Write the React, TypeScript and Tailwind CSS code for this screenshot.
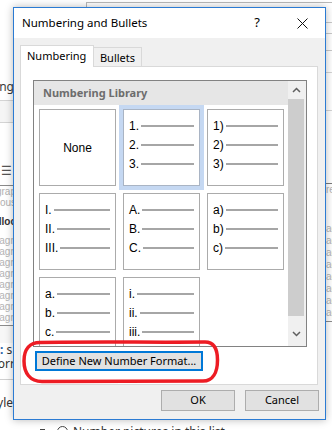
import React from 'react'

interface Cell {
  labels?: string[]
  none?: boolean
  selected?: boolean
}

const cells: Cell[] = [
  { none: true },
  { labels: ['1.', '2.', '3.'], selected: true },
  { labels: ['1)', '2)', '3)'] },
  { labels: ['I.', 'II.', 'III.'] },
  { labels: ['A.', 'B.', 'C.'] },
  { labels: ['a)', 'b)', 'c)'] },
  { labels: ['a.', 'b.', 'c.'] },
  { labels: ['i.', 'ii.', 'iii.'] },
]

function NumberCell({ cell }: { cell: Cell }) {
  const ring = cell.selected ? 'shadow-[0_0_0_4px_#c5d8f2] border-[#a9b4c4]' : 'border-[#ababab]'
  if (cell.none) {
    return (
      <div className={`h-[77px] w-[77px] border bg-white flex items-center justify-center text-[12px] text-black ${ring}`}>
        None
      </div>
    )
  }
  return (
    <div className={`h-[77px] w-[77px] border bg-white px-[5px] pt-[6px] flex flex-col ${ring}`}>
      {cell.labels?.map((label) => (
        <div key={label} className="h-[19px] flex items-center">
          <span className="text-[12px] leading-none text-black">{label}</span>
          <div className="ml-[2px] h-[2px] flex-1 bg-[#a6a6a6]" />
        </div>
      ))}
    </div>
  )
}

function Chevron({ up }: { up?: boolean }) {
  return (
    <svg width="9" height="6" viewBox="0 0 9 6">
      <path
        d={up ? 'M1 5 L4.5 1.5 L8 5' : 'M1 1 L4.5 4.5 L8 1'}
        fill="none"
        stroke="#5f5f5f"
        strokeWidth="1.5"
      />
    </svg>
  )
}

function LeftStrip() {
  return (
    <div className="w-[16px] h-[413px] overflow-hidden flex flex-col leading-none text-[11px] font-['Liberation_Sans',Arial,sans-serif]">
      <div className="h-[71px] bg-white" />
      <div className="h-[17px] flex items-center justify-end whitespace-nowrap text-[12px] text-[#3a3a3a] font-['Noto_Sans',sans-serif] pr-[2px]">
        Numbering
      </div>
      <div className="h-[5px]" />
      <div className="h-[23px] bg-[#f5f5f5] border-y border-[#d4d4d4]" />
      <div className="h-[40px] bg-white" />
      <div className="h-[15px] flex items-center pl-[1px] text-[12px] text-[#555]">☰</div>
      <div className="h-[7px] bg-white" />
      <div className="h-[1px] bg-[#8a8a8a]" />
      <div className="h-[11px] flex items-center justify-end whitespace-nowrap text-[10px] text-[#b0b0b0]">Paragrap</div>
      <div className="h-[12px] flex items-center justify-end whitespace-nowrap text-[10px] text-[#b0b0b0]">Previous</div>
      <div className="h-[6px]" />
      <div className="h-[14px] flex items-center justify-end whitespace-nowrap text-[10px] font-bold text-[#333]">Followlloc</div>
      <div className="h-[6px]" />
      {[0, 1, 2, 3, 4, 5, 6, 7].map((i) => (
        <div key={i} className="h-[11px] flex items-center justify-end whitespace-nowrap text-[10px] text-[#b4b4b4]">
          Paragn
        </div>
      ))}
      <div className="h-[2px]" />
      <div className="h-[1px] bg-[#8c8c8c]" />
      <div className="h-[17px] bg-[#f7f7f7]" />
      <div className="h-[14px] flex items-center whitespace-nowrap text-[12px] text-[#333] font-['Noto_Sans',sans-serif]">
        <span className="text-[#1f5fa8] font-bold">:</span>&nbsp;s
      </div>
      <div className="h-[14px] flex items-center justify-end whitespace-nowrap text-[12px] text-[#333] font-['Noto_Sans',sans-serif] pr-[1px]">
        Forr
      </div>
      <div className="h-[8px]" />
      <div className="h-[1px] bg-[#d0d0d0]" />
      <div className="h-[16px]" />
      <div className="h-[14px] flex items-center justify-end whitespace-nowrap text-[12px] text-[#333] font-['Noto_Sans',sans-serif] pr-[3px]">
        Style
      </div>
    </div>
  )
}

function RightStrip() {
  return (
    <div className="w-[6px] h-[413px] overflow-hidden flex flex-col leading-none text-[10px] font-['Liberation_Sans',Arial,sans-serif]">
      <div className="h-[15px]" />
      <div className="h-[1px] bg-[#c8c8c8]" />
      <div className="h-[10px]" />
      <div className="h-[1px] bg-[#c8c8c8]" />
      <div className="h-[16px]" />
      <div className="h-[1px] bg-[#c8c8c8]" />
      <div className="h-[21px]" />
      <div className="h-[1px] bg-[#d4d4d4]" />
      <div className="h-[37px]" />
      <div className="h-[1px] bg-[#d4d4d4]" />
      <div className="h-[72px]" />
      <div className="h-[1px] bg-[#7a7a7a]" />
      <div className="h-[12px] flex items-center whitespace-nowrap text-[#b4b4b4]">re</div>
      <div className="h-[27px]" />
      {[0, 1, 2, 3, 4, 5, 6, 7].map((i) => (
        <div key={i} className="h-[12px] flex items-center whitespace-nowrap text-[#b4b4b4]">agn</div>
      ))}
      <div className="h-[2px]" />
      <div className="h-[1px] bg-[#8c8c8c]" />
    </div>
  )
}

export default function App() {
  return (
    <div className="relative w-[332px] h-[430px] overflow-hidden bg-white font-['Noto_Sans',sans-serif]">
      {/* the Word window behind the dialog */}
      <div className="flex flex-col">
        <div className="h-[7px] flex">
          <div className="w-[86px]" />
          <div className="flex-1 mt-[2px] border-t border-l border-[#b9b9b9]" />
        </div>
        <div className="flex justify-between">
          <LeftStrip />
          <RightStrip />
        </div>
        <div className="h-[10px] flex items-start pt-[6px] text-[12px] text-[#333] whitespace-nowrap">
          <div className="w-[40px]" />
          <div className="w-[5px] h-[1px] mt-[3px] bg-[#444]" />
          <div className="ml-[12px] w-[11px] h-[11px] rounded-full border border-[#444]" />
          <span className="ml-[5px] leading-none">Number pictures in this list</span>
        </div>
      </div>

      {/* dialog */}
      <div className="absolute left-[13px] top-[7px] w-[313px] h-[413px] border border-[#2b7bd3] bg-[#f0f0f0] shadow-[0_0_8px_rgba(0,0,0,0.28)] flex flex-col">
        <div className="h-[30px] bg-white flex items-center">
          <div className="flex-1 pl-[8px] text-[11.5px] text-black">Numbering and Bullets</div>
          <div className="w-[46px] h-[30px] flex items-center justify-center text-[13px] text-black">?</div>
          <div className="w-[45px] h-[30px] flex items-center justify-center">
            <svg width="11" height="11" viewBox="0 0 11 11">
              <path d="M0.5 0.5 L10.5 10.5 M10.5 0.5 L0.5 10.5" stroke="#111" strokeWidth="1" />
            </svg>
          </div>
        </div>

        <div className="pl-[6px] pt-[7px] flex flex-col text-[11px] text-black">
          <div className="h-[22px] flex items-end">
            <div className="relative z-10 h-[22px] w-[74px] bg-white border border-b-0 border-[#d9d9d9] pl-[6px] flex items-center">
              Numbering
            </div>
            <div className="h-[20px] w-[48px] border-t border-r border-[#d9d9d9] flex items-center justify-center pt-[1px]">
              Bullets
            </div>
          </div>

          <div className="-mt-[1px] w-[298px] h-[319px] bg-white border border-[#d9d9d9] pl-[12px] pt-[13px]">
            <div className="w-[274px] h-[267px] border border-[#828282] flex">
              <div className="w-[254px] h-[265px] overflow-hidden">
                <div className="h-[24px] bg-[#e6e6e6] pl-[9px] flex items-center font-bold text-[#6d6d6d]">
                  Numbering Library
                </div>
                <div className="pl-[5px] pt-[4px] grid grid-cols-[77px_77px_77px] gap-[7px] font-['Liberation_Sans',Arial,sans-serif]">
                  {cells.map((cell, i) => (
                    <NumberCell key={i} cell={cell} />
                  ))}
                </div>
              </div>
              <div className="w-[18px] h-[265px] bg-[#f0f0f0] flex flex-col">
                <div className="h-[18px] flex items-center justify-center pr-[2px]">
                  <Chevron up />
                </div>
                <div className="h-[217px] mr-[2px] bg-[#cdcdcd]" />
                <div className="flex-1 flex items-center justify-center pr-[2px] pt-[6px]">
                  <Chevron />
                </div>
              </div>
            </div>

            <button className="mt-[4px] ml-[2px] w-[168px] h-[20px] border-2 border-[#0078d7] bg-[#e1e1e1] flex items-center justify-center text-[11px] text-black">
              Define New Number Format...
            </button>
          </div>
        </div>

        <div className="mt-[5px] pr-[6px] flex justify-end gap-[10px] text-[11px] text-black">
          <button className="w-[74px] h-[21px] bg-[#e1e1e1] border border-[#adadad] flex items-center justify-center">
            OK
          </button>
          <button className="w-[74px] h-[21px] bg-[#e1e1e1] border border-[#adadad] flex items-center justify-center">
            Cancel
          </button>
        </div>
      </div>

      {/* red annotation drawn round the button */}
      <svg className="absolute left-[22px] top-[339px]" width="198" height="46" viewBox="0 0 198 46">
        <path
          d="M18 3.5 C70 2.5 130 3.5 183 3 C192 3 195.5 10 195.5 21 C195.5 33 191 42 181 42 C130 42.5 70 42 20 42.5 C8 42.5 2 34 2 22 C2 10 8 3.5 18 3.5 Z"
          fill="none"
          stroke="#ed1c24"
          strokeWidth="3.5"
        />
      </svg>
    </div>
  )
}
